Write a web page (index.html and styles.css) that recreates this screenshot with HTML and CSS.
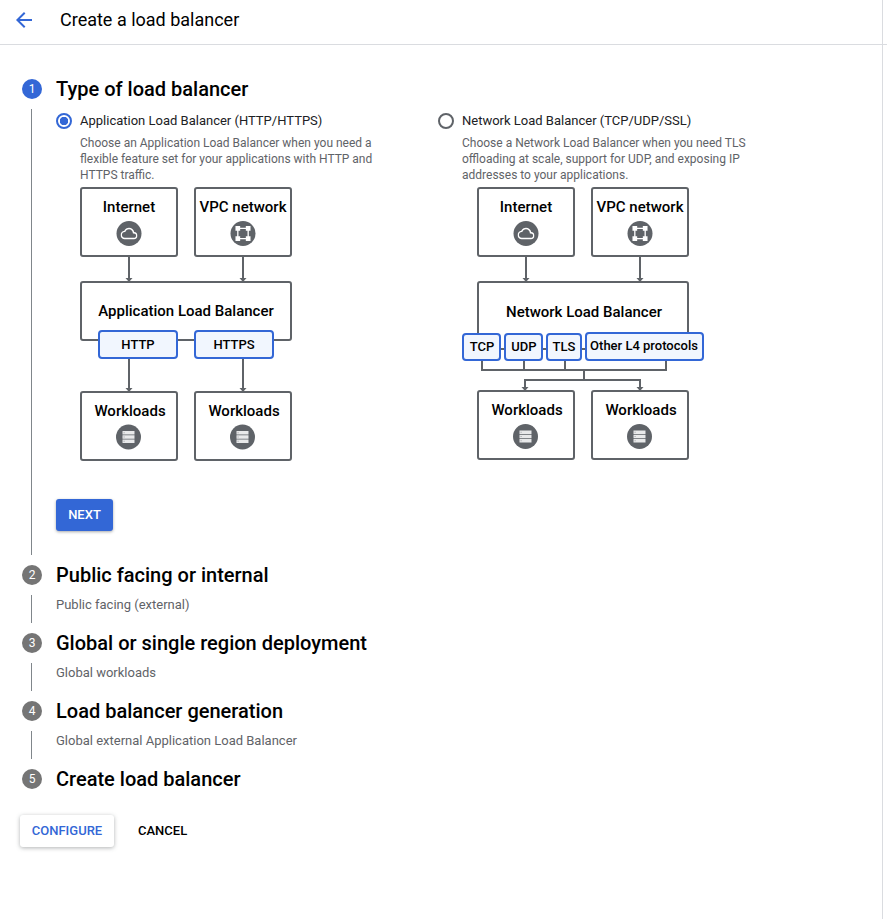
FILE: index.html
```html
<!DOCTYPE html>
<html>
	<head>
		<meta charset="utf-8">
		<link rel="stylesheet" href="styles.css">
		<title>Create a load balancer</title>
	</head>
	<body>
		<svg class="sprite" width="0" height="0">
			<symbol id="icon_cloud" viewBox="0 0 24 24">
				<path fill="#fff" d="M19.35 10.04C18.67 6.59 15.64 4 12 4 9.11 4 6.6 5.64 5.35 8.04 2.34 8.36 0 10.91 0 14c0 3.31 2.69 6 6 6h13c2.76 0 5-2.24 5-5 0-2.64-2.05-4.78-4.65-4.96zM19 18H6c-2.21 0-4-1.79-4-4s1.79-4 4-4h.71C7.37 7.69 9.48 6 12 6c3.04 0 5.5 2.46 5.5 5.5v.5H19c1.66 0 3 1.34 3 3s-1.34 3-3 3z"/>
			</symbol>
			<symbol id="icon_vpc" viewBox="0 0 17 17">
				<path fill="none" stroke="#fff" stroke-width="1.4" d="M3 3h11v11H3z"/>
				<path fill="#fff" d="M0.5 0.5h5v5h-5zM11.5 0.5h5v5h-5zM0.5 11.5h5v5h-5zM11.5 11.5h5v5h-5z"/>
			</symbol>
			<symbol id="icon_storage" viewBox="0 0 14 14">
				<path fill="#e8e9ea" d="M1 1h12v3.600H1zM1 5.200h12v3.600H1zM1 9.400h12V13H1z"/>
				<path fill="#a9acb0" d="M2 2.300h1.200v1H2zM2 6.500h1.200v1H2zM2 10.700h1.200v1H2z"/>
			</symbol>
		</svg>
		<div class="page">
			<header class="topbar">
				<svg class="back_icon" width="24" height="24" viewBox="0 0 24 24">
					<path d="M20 11H7.83l5.59-5.59L12 4l-8 8 8 8 1.41-1.41L7.83 13H20v-2z"/>
				</svg>
				<h1>Create a load balancer</h1>
			</header>
			<main class="content">
				<section class="step">
					<span class="step_num step_num_active">1</span>
					<h2>Type of load balancer</h2>
					<div class="step_line"></div>
					<div class="step_body step_body_open">
						<div class="options">
							<div class="option">
								<div class="option_head">
									<span class="radio radio_on"></span>
									<label>Application Load Balancer (HTTP/HTTPS)</label>
								</div>
								<p class="option_desc">Choose an Application Load Balancer when you need a flexible feature set for your applications with HTTP and HTTPS traffic.</p>
								<svg class="diagram" width="216" height="278" viewBox="78 186 216 278">
									<g class="box">
										<rect x="81" y="188" width="96" height="68" rx="2"/>
										<rect x="195" y="188" width="96" height="68" rx="2"/>
										<rect x="81" y="282" width="210" height="58" rx="2"/>
										<rect x="81" y="392" width="96" height="68" rx="2"/>
										<rect x="195" y="392" width="96" height="68" rx="2"/>
									</g>
									<path class="wire" d="M129 256v23M243 256v23M129 358v31M243 358v31"/>
									<path class="head" d="M125.500 278h7l-3.500 4zM239.500 278h7l-3.500 4zM125.500 388h7l-3.500 4zM239.500 388h7l-3.500 4z"/>
									<rect class="chip" x="99" y="331" width="78" height="27" rx="3"/>
									<rect class="chip" x="195" y="331" width="78" height="27" rx="3"/>
									<text class="node_label" x="129" y="212">Internet</text>
									<text class="node_label" x="243" y="212">VPC network</text>
									<text class="node_label" x="186" y="316">Application Load Balancer</text>
									<text class="chip_label" x="138" y="349">HTTP</text>
									<text class="chip_label" x="234" y="349">HTTPS</text>
									<text class="node_label" x="130" y="416">Workloads</text>
									<text class="node_label" x="244" y="416">Workloads</text>
									<g class="badge">
										<circle cx="129" cy="233.500" r="12.500"/>
										<circle cx="243" cy="233.500" r="12.500"/>
										<circle cx="128.500" cy="437" r="12.500"/>
										<circle cx="242.500" cy="437" r="12.500"/>
									</g>
									<use href="#icon_cloud" x="120.500" y="225" width="17" height="17"/>
									<use href="#icon_vpc" x="235" y="225.500" width="16" height="16"/>
									<use href="#icon_storage" x="121.500" y="430" width="14" height="14"/>
									<use href="#icon_storage" x="235.500" y="430" width="14" height="14"/>
								</svg>
							</div>
							<div class="option">
								<div class="option_head">
									<span class="radio"></span>
									<label>Network Load Balancer (TCP/UDP/SSL)</label>
								</div>
								<p class="option_desc">Choose a Network Load Balancer when you need TLS offloading at scale, support for UDP, and exposing IP addresses to your applications.</p>
								<svg class="diagram" width="246" height="278" viewBox="460 186 246 278">
									<g class="box">
										<rect x="478" y="188" width="96" height="68" rx="2"/>
										<rect x="592" y="188" width="96" height="68" rx="2"/>
										<rect x="478" y="282" width="210" height="67" rx="2"/>
										<rect x="478" y="391" width="96" height="68" rx="2"/>
										<rect x="592" y="391" width="96" height="68" rx="2"/>
									</g>
									<path class="wire" d="M526 256v23M640 256v23M482 360v10h184v-10M524 360v10M565 360v10M584 370v10M525 388v-8h115v8"/>
									<path class="head" d="M522.500 278h7l-3.500 4zM636.500 278h7l-3.500 4zM521.500 387h7l-3.500 4zM636.500 387h7l-3.500 4z"/>
									<rect class="chip" x="463" y="334" width="37" height="26" rx="3"/>
									<rect class="chip" x="505" y="334" width="37" height="26" rx="3"/>
									<rect class="chip" x="547" y="334" width="34" height="26" rx="3"/>
									<rect class="chip" x="586" y="333" width="117" height="27" rx="3"/>
									<text class="node_label" x="526" y="212">Internet</text>
									<text class="node_label" x="640" y="212">VPC network</text>
									<text class="node_label" x="584" y="317">Network Load Balancer</text>
									<text class="chip_label" x="482" y="351">TCP</text>
									<text class="chip_label" x="524" y="351">UDP</text>
									<text class="chip_label" x="564" y="351">TLS</text>
									<text class="chip_label" x="644" y="350">Other L4 protocols</text>
									<text class="node_label" x="527" y="415">Workloads</text>
									<text class="node_label" x="641" y="415">Workloads</text>
									<g class="badge">
										<circle cx="526" cy="233.500" r="12.500"/>
										<circle cx="640" cy="233.500" r="12.500"/>
										<circle cx="525.500" cy="436.500" r="12.500"/>
										<circle cx="639.500" cy="436.500" r="12.500"/>
									</g>
									<use href="#icon_cloud" x="517.500" y="225" width="17" height="17"/>
									<use href="#icon_vpc" x="632" y="225.500" width="16" height="16"/>
									<use href="#icon_storage" x="518.500" y="429.500" width="14" height="14"/>
									<use href="#icon_storage" x="632.500" y="429.500" width="14" height="14"/>
								</svg>
							</div>
						</div>
						<button class="btn btn_primary" type="button">NEXT</button>
					</div>
				</section>
				<section class="step">
					<span class="step_num">2</span>
					<h2>Public facing or internal</h2>
					<div class="step_line"></div>
					<div class="step_body">Public facing (external)</div>
				</section>
				<section class="step">
					<span class="step_num">3</span>
					<h2>Global or single region deployment</h2>
					<div class="step_line"></div>
					<div class="step_body">Global workloads</div>
				</section>
				<section class="step">
					<span class="step_num">4</span>
					<h2>Load balancer generation</h2>
					<div class="step_line"></div>
					<div class="step_body">Global external Application Load Balancer</div>
				</section>
				<section class="step step_last">
					<span class="step_num">5</span>
					<h2>Create load balancer</h2>
				</section>
				<div class="actions">
					<button class="btn btn_raised" type="button">CONFIGURE</button>
					<button class="btn btn_flat" type="button">CANCEL</button>
				</div>
			</main>
		</div>
	</body>
</html>
```

FILE: styles.css
```css
*{ box-sizing: border-box; }
body{ margin: 0; font-family: Roboto, "Liberation Sans", sans-serif; color: #000; background: #fff; }
h1, h2, p{ margin: 0; }
.sprite{ display: block; height: 0; }

.page{ width: 883px; min-height: 919px; border-right: 1px solid #dadce0; }
.topbar{ display: flex; align-items: center; gap: 24px; height: 45px; margin-right: -5px; padding: 0 0 5px 12px; border-bottom: 1px solid #dadce0; }
.topbar h1{ font-size: 18px; font-weight: 400; line-height: 24px; }
.back_icon{ fill: #3367d6; }

.content{ padding: 34px 0 0 22px; }
.step{ display: grid; grid-template-columns: 20px 1fr; column-gap: 14px; }
.step h2{ font-size: 20px; font-weight: 500; line-height: 20px; white-space: nowrap; }
.step_num{ width: 20px; height: 20px; border-radius: 50%; background: #757575; color: #fff; font-size: 12px; line-height: 20px; text-align: center; }
.step_num_active{ background: #3367d6; }
.step_line{ justify-self: center; width: 1px; margin: 10px 1px 10px 0; background: #80868b; }
.step_body{ padding-top: 11px; height: 48px; font-size: 13px; line-height: 18px; color: #5f6368; }
.step_body_open{ height: auto; padding: 14px 0 34px; }

.options{ display: flex; gap: 0; }
.option{ width: 382px; }
.option_head{ display: flex; align-items: center; gap: 8px; height: 16px; font-size: 13px; color: #202124; }
.radio{ width: 16px; height: 16px; border: 2px solid #5f6368; border-radius: 50%; }
.radio_on{ border-color: #3367d6; background: radial-gradient(circle, #3367d6 0 4px, #fff 4.500px); }
.option_desc{ width: 300px; margin: 6px 0 0 24px; font-size: 12px; line-height: 16px; color: #5f6368; }
.diagram{ display: block; margin: 3px 0 0 22px; }

.box rect{ fill: #fff; stroke: #5f6368; stroke-width: 2; }
.wire{ fill: none; stroke: #5f6368; stroke-width: 2; }
.head{ fill: #5f6368; }
.chip{ fill: #f1f6fe; stroke: #3367d6; stroke-width: 2; }
.badge circle{ fill: #5f6368; }
.node_label{ font-size: 15px; font-weight: 500; text-anchor: middle; }
.chip_label{ font-size: 13px; font-weight: 500; text-anchor: middle; }

.btn{ height: 32px; padding: 0 0 2px; border: 0; border-radius: 3px; font-family: inherit; font-size: 13px; font-weight: 500; }
.btn_primary{ display: block; width: 57px; margin-top: 35px; background: #3367d6; color: #fff; box-shadow: 0 1px 3px rgba(60, 64, 67, 0.45); }
.actions{ display: flex; gap: 24px; margin: 26px 0 0 -2px; }
.btn_raised{ width: 94px; background: #fff; color: #3367d6; box-shadow: 0 1px 4px rgba(60, 64, 67, 0.4); }
.btn_flat{ background: none; color: #000; }
```
